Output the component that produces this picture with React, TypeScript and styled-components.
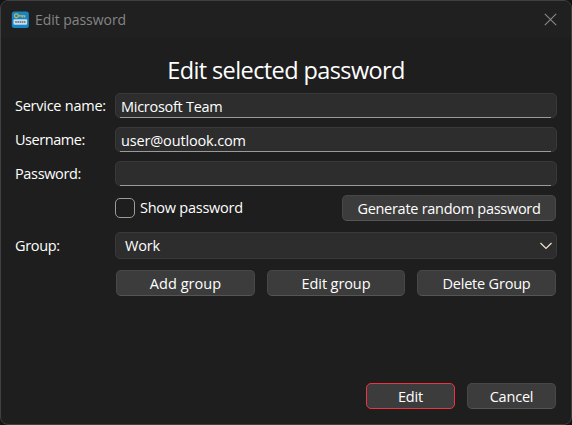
import React from 'react';
import styled, { createGlobalStyle } from 'styled-components';

const GlobalStyle = createGlobalStyle`
  * { box-sizing: border-box; }
  body { margin: 0; background: #141414; overflow: hidden; }
  button, input { font: inherit; color: inherit; }
`;

const Dialog = styled.form`
  width: 572px;
  height: 425px;
  display: flex;
  flex-direction: column;
  background: #1e1e1e;
  border: 1px solid #404040;
  border-radius: 8px;
  color: #fff;
  font: 14.5px/20px "Open Sans", "Noto Sans", sans-serif;
`;

const TitleBar = styled.header`
  height: 37px;
  flex: none;
  display: flex;
  align-items: center;
  padding: 0 14px 0 10px;
  background: #202020;
  border-radius: 7px 7px 0 0;
  color: #858585;
  font-size: 14px;
`;

const WindowTitle = styled.span`
  margin-left: 6px;
  flex: 1;
  letter-spacing: -0.05px;
`;

const CloseButton = styled.button`
  display: flex;
  padding: 0;
  border: 0;
  background: none;
`;

const Heading = styled.h1`
  margin: 17px 0 8px;
  height: 30px;
  text-align: center;
  font-size: 23.5px;
  line-height: 30px;
  font-weight: 400;
  letter-spacing: -0.6px;
`;

const Fields = styled.div`
  display: grid;
  grid-template-columns: 100px 442px;
  grid-template-rows: 34px 34px 34px 37px 38px 26px;
  padding-left: 14px;
`;

const Label = styled.label<{ $spacing?: number; $height?: number }>`
  height: ${({ $height = 25 }) => $height}px;
  line-height: ${({ $height = 25 }) => $height}px;
  white-space: nowrap;
  letter-spacing: ${({ $spacing = 0 }) => $spacing}px;
`;

const InputFrame = styled.div`
  height: 25px;
  position: relative;
  background: #2d2d2d;
  border: 1px solid #393939;
  border-radius: 5px;
  &::after {
    content: '';
    position: absolute;
    left: 4px;
    right: 5px;
    bottom: -1px;
    height: 1px;
    background: #9a9a9a;
  }
`;

const TextInput = styled.input<{ $spacing?: number }>`
  display: block;
  width: 100%;
  height: 23px;
  padding: 1px 5px 0;
  border: 0;
  outline: 0;
  background: none;
  letter-spacing: ${({ $spacing = 0 }) => $spacing}px;
`;

const Button = styled.button<{ $spacing?: number; $primary?: boolean; $width: number }>`
  width: ${({ $width }) => $width}px;
  height: 26px;
  padding: 1px 0 0;
  display: flex;
  align-items: center;
  justify-content: center;
  white-space: nowrap;
  background: #3c3c3c;
  border: 1px solid ${({ $primary }) => ($primary ? '#ef3340' : '#484848')};
  border-bottom-color: ${({ $primary }) => ($primary ? '#ef3340' : '#555')};
  border-radius: 5px;
  letter-spacing: ${({ $spacing = 0 }) => $spacing}px;
`;

const OptionsRow = styled.div`
  display: flex;
  justify-content: space-between;
  align-items: flex-start;
  padding-right: 1px;
`;

const CheckLabel = styled.label`
  display: flex;
  align-items: center;
  gap: 5px;
  height: 26px;
  letter-spacing: -0.25px;
`;

const CheckBox = styled.span`
  width: 20px;
  height: 20px;
  border: 1px solid #9b9b9b;
  border-radius: 5px;
`;

const Select = styled.div`
  height: 27px;
  display: flex;
  align-items: center;
  justify-content: space-between;
  padding: 1px 3px 0 9px;
  background: #2d2d2d;
  border: 1px solid #393939;
  border-radius: 5px;
  letter-spacing: -0.2px;
`;

const GroupActions = styled.div`
  grid-column: 2;
  display: flex;
  justify-content: space-between;
  padding: 0 1px;
`;

const Footer = styled.footer`
  margin-top: auto;
  display: flex;
  justify-content: flex-end;
  gap: 12px;
  padding: 0 15px 15px 0;
`;

const AppIcon = () => (
  <svg width="18" height="18" viewBox="0 0 18 18">
    <rect x="0.8" y="0.5" width="17" height="16.5" rx="2.5" fill="#1685c6" />
    <circle cx="5.4" cy="4.8" r="1.9" fill="none" stroke="#c3b55b" strokeWidth="1.2" />
    <path d="M7.3 4.8H14.3M11.3 4.8V6.5M13.7 4.8V6.5" fill="none" stroke="#c3b55b" strokeWidth="1.2" />
    <rect x="2.5" y="8.2" width="13.6" height="5.6" rx="1" fill="#c9dce8" />
    <path d="M4.2 10.9H14.4" stroke="#74828d" strokeWidth="2" strokeDasharray="1.6 0.6" />
  </svg>
);

export default function App() {
  return (
    <>
      <GlobalStyle />
      <Dialog onSubmit={(e) => e.preventDefault()}>
        <TitleBar>
          <AppIcon />
          <WindowTitle>Edit password</WindowTitle>
          <CloseButton type="button" aria-label="Close">
            <svg width="13" height="13" viewBox="0 0 13 13">
              <path d="M0.8 0.8L12.2 12.2M12.2 0.8L0.8 12.2" stroke="#8a8a8a" strokeWidth="1.1" />
            </svg>
          </CloseButton>
        </TitleBar>
        <Heading>Edit selected password</Heading>
        <Fields>
          <Label htmlFor="service" $spacing={-0.25}>Service name:</Label>
          <InputFrame>
            <TextInput id="service" defaultValue="Microsoft Team" $spacing={-0.28} />
          </InputFrame>
          <Label htmlFor="username" $spacing={-0.45}>Username:</Label>
          <InputFrame>
            <TextInput id="username" defaultValue="user@outlook.com" $spacing={-0.15} />
          </InputFrame>
          <Label htmlFor="password" $spacing={-0.35}>Password:</Label>
          <InputFrame>
            <TextInput id="password" type="password" />
          </InputFrame>
          <span />
          <OptionsRow>
            <CheckLabel>
              <CheckBox />
              Show password
            </CheckLabel>
            <Button type="button" $width={214} $spacing={-0.28}>Generate random password</Button>
          </OptionsRow>
          <Label $height={27} $spacing={-0.35}>Group:</Label>
          <Select>
            Work
            <svg width="14" height="8" viewBox="0 0 14 8">
              <path d="M1.5 1L7 6.5L12.5 1" fill="none" stroke="#f0e6c8" strokeWidth="1.2" />
            </svg>
          </Select>
          <GroupActions>
            <Button type="button" $width={139} $spacing={0.05}>Add group</Button>
            <Button type="button" $width={138} $spacing={-0.1}>Edit group</Button>
            <Button type="button" $width={139} $spacing={-0.2}>Delete Group</Button>
          </GroupActions>
        </Fields>
        <Footer>
          <Button type="submit" $width={89} $primary $spacing={-0.2}>Edit</Button>
          <Button type="button" $width={89} $spacing={-0.2}>Cancel</Button>
        </Footer>
      </Dialog>
    </>
  );
}
